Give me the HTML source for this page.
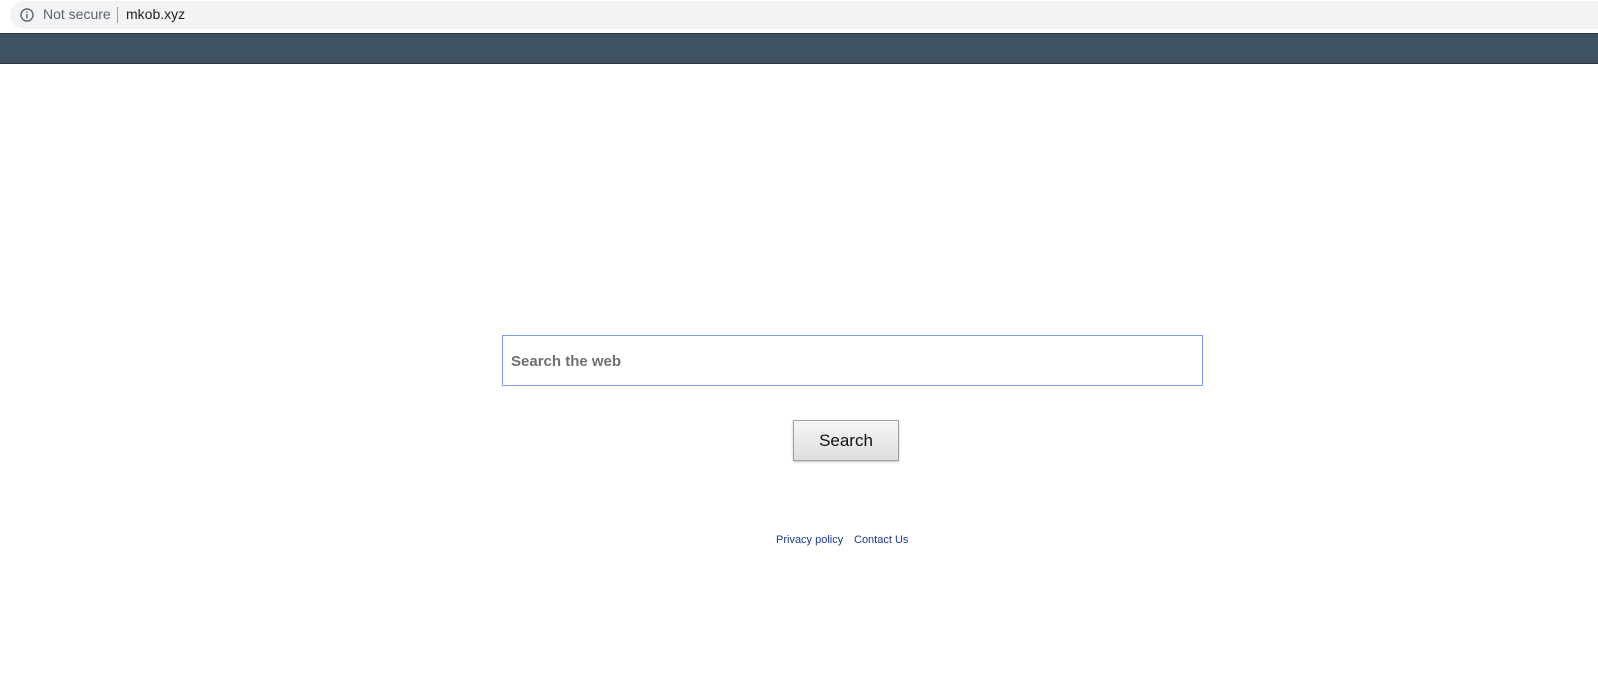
<!DOCTYPE html>
<html><head><style>
body{margin:0;width:1598px;height:676px;background:#fff;font-family:"Liberation Sans",Arial,sans-serif;position:relative;overflow:hidden}
.addr{position:absolute;left:10px;top:1px;width:1600px;height:28px;background:#f1f3f4;border-radius:14px}
.bar{position:absolute;left:0;top:33px;width:1598px;height:29px;background:#3f5261;border-top:1px solid #2a3540;border-bottom:1px solid #2a3540}
.inp{position:absolute;left:502px;top:335px;width:699px;height:49px;border:1px solid #7aa0e8;box-sizing:content-box}
.inp span{position:absolute;left:8px;top:17px;font-size:15px;font-weight:bold;color:#707070}
.btn{position:absolute;left:793px;top:420px;width:104px;height:39px;border:1px solid #a0a0a0;background:linear-gradient(#f6f6f6,#dedede);box-shadow:0 1px 2px rgba(0,0,0,.25);text-align:center;line-height:39px;font-size:17px;color:#111}
.links{position:absolute;top:534px;font-size:11px;color:#1a3a8a}
</style></head><body>
<div class="addr"></div>
<svg style="position:absolute;left:20px;top:8px" width="14" height="14" viewBox="0 0 14 14"><circle cx="7" cy="7" r="6" fill="none" stroke="#5f6368" stroke-width="1.4"/><rect x="6.3" y="6" width="1.4" height="4.5" fill="#5f6368"/><rect x="6.3" y="3.5" width="1.4" height="1.4" fill="#5f6368"/></svg>
<div style="position:absolute;left:43px;top:6px;font-size:14px;color:#5f6368">Not secure</div>
<div style="position:absolute;left:117px;top:7px;width:1px;height:16px;background:#9aa0a6"></div>
<div style="position:absolute;left:126px;top:6px;font-size:14px;color:#202124">mkob.xyz</div>
<div class="bar"></div>
<div class="inp"><span>Search the web</span></div>
<div class="btn">Search</div>
<div class="links" style="left:776px">Privacy policy</div>
<div class="links" style="left:854px">Contact Us</div>
</body></html>
